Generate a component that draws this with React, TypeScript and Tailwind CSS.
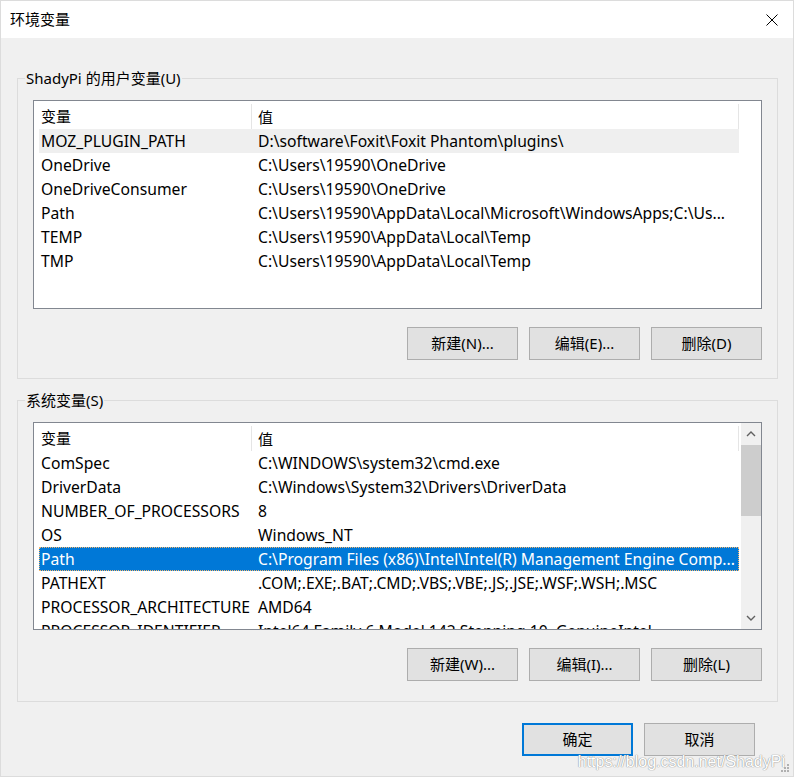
import React from "react";

type Row = [string, string];

const userVars: Row[] = [
  ["MOZ_PLUGIN_PATH", "D:\\software\\Foxit\\Foxit Phantom\\plugins\\"],
  ["OneDrive", "C:\\Users\\19590\\OneDrive"],
  ["OneDriveConsumer", "C:\\Users\\19590\\OneDrive"],
  ["Path", "C:\\Users\\19590\\AppData\\Local\\Microsoft\\WindowsApps;C:\\Us..."],
  ["TEMP", "C:\\Users\\19590\\AppData\\Local\\Temp"],
  ["TMP", "C:\\Users\\19590\\AppData\\Local\\Temp"],
];

const sysVars: Row[] = [
  ["ComSpec", "C:\\WINDOWS\\system32\\cmd.exe"],
  ["DriverData", "C:\\Windows\\System32\\Drivers\\DriverData"],
  ["NUMBER_OF_PROCESSORS", "8"],
  ["OS", "Windows_NT"],
  ["Path", "C:\\Program Files (x86)\\Intel\\Intel(R) Management Engine Comp..."],
  ["PATHEXT", ".COM;.EXE;.BAT;.CMD;.VBS;.VBE;.JS;.JSE;.WSF;.WSH;.MSC"],
  ["PROCESSOR_ARCHITECTURE", "AMD64"],
  ["PROCESSOR_IDENTIFIER", "Intel64 Family 6 Model 142 Stepping 10, GenuineIntel"],
];

function Chevron({ up }: { up?: boolean }) {
  return (
    <svg width="10" height="6" viewBox="0 0 10 6" className="text-[#606060]">
      <polyline
        points={up ? "1,5 5,1 9,5" : "1,1 5,5 9,1"}
        fill="none"
        stroke="currentColor"
        strokeWidth="1.4"
      />
    </svg>
  );
}

function ListView({
  rows,
  hover,
  selected,
  scroll,
  height,
}: {
  rows: Row[];
  hover?: number;
  selected?: number;
  scroll?: boolean;
  height: string;
}) {
  return (
    <div className={`flex w-[729px] overflow-hidden border border-[#828790] bg-white ${height}`}>
      <div className="flex w-[706px] flex-col">
        <div className="flex h-[28px] shrink-0 items-center pt-[3px]">
          <div className="w-[217px] pl-[7px]">变量</div>
          <div className="h-full w-[488px] border-x border-[#e5e5e5] pl-[6px] leading-[26px]">值</div>
        </div>
        {rows.map(([name, value], i) => {
          const sel = i === selected;
          const hov = i === hover;
          return (
            <div
              key={name}
              className={`ml-[5px] flex h-[24px] w-[700px] shrink-0 items-center whitespace-nowrap pt-[2px] text-[15.7px] ${
                sel
                  ? "border border-dotted border-[#f5b56b] bg-[#0078d7] text-white"
                  : hov
                    ? "bg-[#efefef]"
                    : ""
              }`}
            >
              <div className={`overflow-hidden ${sel ? "w-[211px] pl-[1px]" : "w-[212px] pl-[2px]"}`}>{name}</div>
              <div className="flex-1 overflow-hidden pl-[7px]">{value}</div>
            </div>
          );
        })}
      </div>
      {scroll && (
        <div className="ml-[1px] flex w-[20px] flex-col bg-[#f0f0f0]">
          <div className="flex h-[22px] items-center justify-center">
            <Chevron up />
          </div>
          <div className="h-[71px] bg-[#cdcdcd]" />
          <div className="flex-1" />
          <div className="flex h-[22px] items-center justify-center">
            <Chevron />
          </div>
        </div>
      )}
    </div>
  );
}

function Btn({ label, primary }: { label: string; primary?: boolean }) {
  return (
    <button
      className={`flex h-[33px] w-[111px] items-center justify-center bg-[#e1e1e1] text-black ${
        primary ? "border-2 border-[#0078d7]" : "border border-[#adadad]"
      }`}
    >
      {label}
    </button>
  );
}

export default function App() {
  return (
    <div
      className="relative flex h-[777px] w-[794px] flex-col overflow-hidden border-x border-y border-[#dcdcdc] bg-[#f0f0f0] text-[15px] text-black"
      style={{ fontFamily: '"Noto Sans", "Noto Sans CJK SC", sans-serif' }}
    >
      <div className="flex h-[37px] shrink-0 items-center justify-between bg-white pl-[9px] pr-[15px]">
        <span className="leading-none">环境变量</span>
        <svg width="12" height="12" viewBox="0 0 12 12">
          <path d="M0.5 0.5 L11.5 11.5 M11.5 0.5 L0.5 11.5" stroke="#000" strokeWidth="1" />
        </svg>
      </div>

      <div className="flex flex-col pl-[16px]">
        <fieldset className="mt-[30px] w-[761px] border border-[#dcdcdc] px-0 pb-[18px]">
          <legend className="ml-[7px] px-[1px] leading-[20px]">ShadyPi 的用户变量(U)</legend>
          <div className="mt-[12px] flex flex-col pl-[15px]">
            <ListView rows={userVars} hover={0} height="h-[209px]" />
            <div className="mt-[18px] flex gap-[11px] pl-[374px]">
              <Btn label="新建(N)..." />
              <Btn label="编辑(E)..." />
              <Btn label="删除(D)" />
            </div>
          </div>
        </fieldset>

        <fieldset className="mt-[11px] w-[761px] border border-[#dcdcdc] px-0 pb-[20px]">
          <legend className="ml-[7px] px-[1px] leading-[20px]">系统变量(S)</legend>
          <div className="mt-[12px] flex flex-col pl-[15px]">
            <ListView rows={sysVars} selected={4} scroll height="h-[208px]" />
            <div className="mt-[18px] flex gap-[11px] pl-[374px]">
              <Btn label="新建(W)..." />
              <Btn label="编辑(I)..." />
              <Btn label="删除(L)" />
            </div>
          </div>
        </fieldset>
      </div>

      <div className="mt-[21px] flex justify-end gap-[11px] pr-[38px]">
        <Btn label="确定" primary />
        <Btn label="取消" />
      </div>

      <div
        className="absolute bottom-[6px] right-[8px] text-[16px] leading-none text-white"
        style={{
          fontFamily: '"Liberation Sans", sans-serif',
          textShadow: "0 0 1px #8c8c8c, 0 0 1px #8c8c8c",
        }}
      >
        https://blog.csdn.net/ShadyPi
      </div>
      <svg className="absolute bottom-[3px] right-[3px]" width="9" height="9" viewBox="0 0 9 9">
        <g fill="#b0b0b0">
          <rect x="6" y="0" width="2" height="2" />
          <rect x="3" y="3" width="2" height="2" />
          <rect x="6" y="3" width="2" height="2" />
          <rect x="0" y="6" width="2" height="2" />
          <rect x="3" y="6" width="2" height="2" />
          <rect x="6" y="6" width="2" height="2" />
        </g>
      </svg>
    </div>
  );
}
